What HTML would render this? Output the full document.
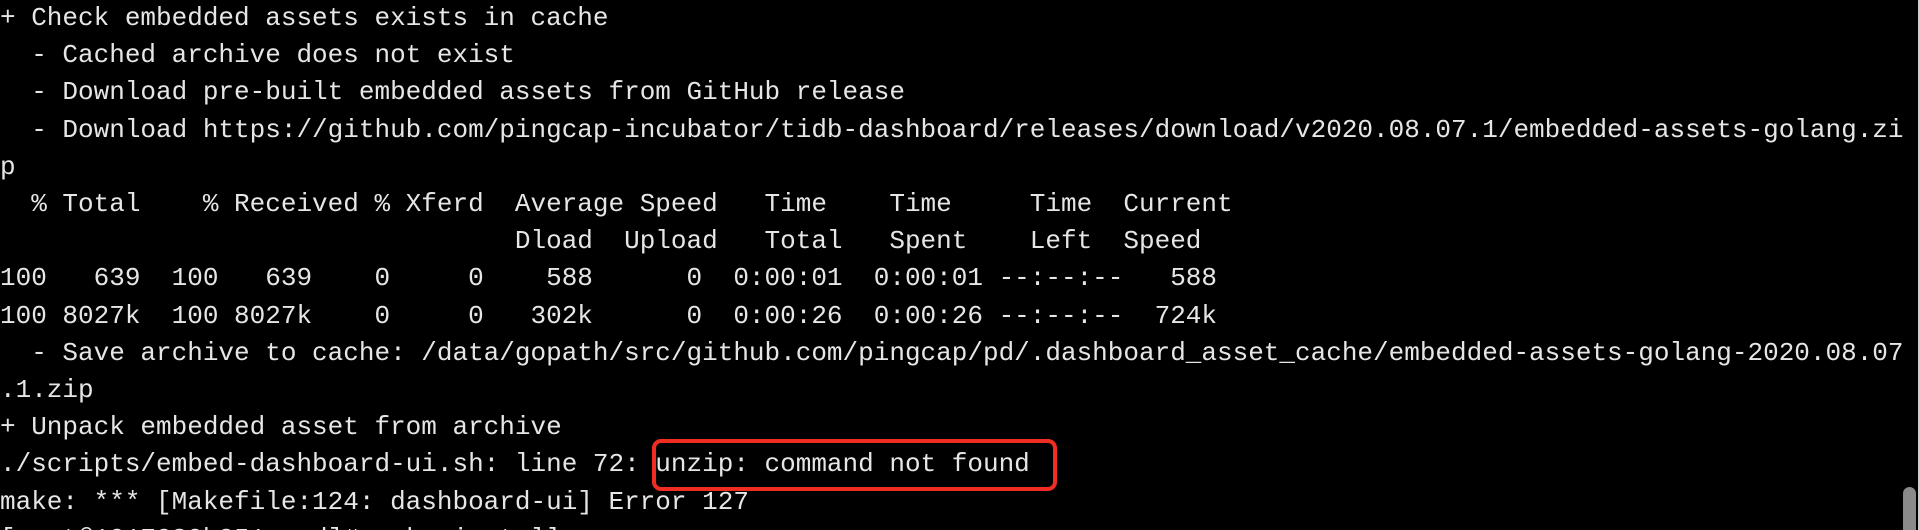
<!DOCTYPE html>
<html><head><meta charset="utf-8"><style>
html,body{margin:0;padding:0;background:#000;width:1920px;height:530px;overflow:hidden}
#w{position:relative;width:1920px;height:530px;overflow:hidden;background:#000}
pre{margin:0;position:absolute;left:0;top:0;font-family:"Liberation Mono",monospace;font-size:26px;line-height:37.2px;color:#e6e6e6;white-space:pre}
.box{position:absolute;left:652px;top:439px;width:397px;height:44px;border:4px solid #f02d22;border-radius:9px}
.sb{position:absolute;left:1903px;top:487px;width:13px;height:60px;border-radius:7px;background:#8a8a8a}
.edge{position:absolute;left:1918px;top:0;width:2px;height:530px;background:#cfcfcf}
</style></head><body><div id="w">
<pre>+ Check embedded assets exists in cache
  - Cached archive does not exist
  - Download pre-built embedded assets from GitHub release
  - Download https://github.com/pingcap-incubator/tidb-dashboard/releases/download/v2020.08.07.1/embedded-assets-golang.zi
p
  % Total    % Received % Xferd  Average Speed   Time    Time     Time  Current
                                 Dload  Upload   Total   Spent    Left  Speed
100   639  100   639    0     0    588      0  0:00:01  0:00:01 --:--:--   588
100 8027k  100 8027k    0     0   302k      0  0:00:26  0:00:26 --:--:--  724k
  - Save archive to cache: /data/gopath/src/github.com/pingcap/pd/.dashboard_asset_cache/embedded-assets-golang-2020.08.07
.1.zip
+ Unpack embedded asset from archive
./scripts/embed-dashboard-ui.sh: line 72: unzip: command not found
make: *** [Makefile:124: dashboard-ui] Error 127
[root@1017280b351a pd]# make install</pre>
<div class="box"></div>
<div class="sb"></div>
<div class="edge"></div>
</div></body></html>
